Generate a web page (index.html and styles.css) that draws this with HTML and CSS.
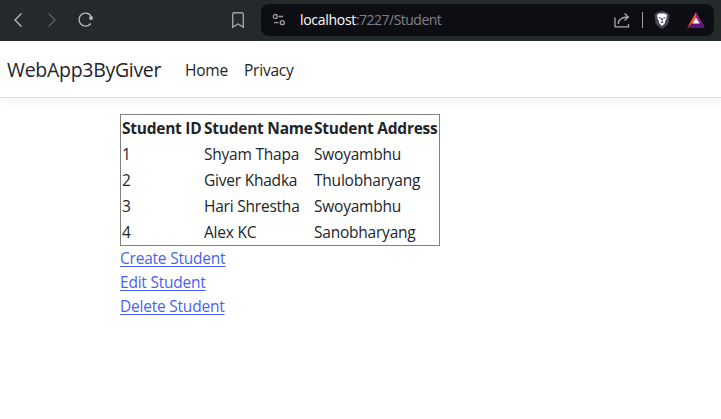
FILE: index.html
```html
<!DOCTYPE html>
<html lang="en">
<head>
<meta charset="utf-8">
<title>Student</title>
<link rel="stylesheet" href="styles.css">
</head>
<body>
<div class="toolbar">
  <svg class="icon back" width="12" height="16" viewBox="0 0 12 16"><path d="M9.500 1.500 3 8l6.500 6.500"/></svg>
  <svg class="icon forward" width="12" height="16" viewBox="0 0 12 16"><path d="M2.500 1.500 9 8l-6.500 6.500"/></svg>
  <svg class="icon reload" width="18" height="18" viewBox="0 0 18 18"><path d="M13.800 12.500A6.500 6.500 0 1 1 14.300 5.500"/><circle class="solid" cx="14" cy="7" r="2"/></svg>
  <svg class="icon bookmark" width="14" height="18" viewBox="0 0 14 18"><path d="M1.700 3.300Q1.700 1.700 3.300 1.700h7.400Q12.300 1.700 12.300 3.300v12.900L7 13l-5.300 3.200z"/></svg>
  <div class="address">
    <svg class="icon site" width="14" height="14" viewBox="0 0 14 14"><circle cx="3.300" cy="3.500" r="2"/><path d="M6.500 3.500h4.500M2 9.700h4.500"/><circle cx="10.300" cy="9.700" r="2"/></svg>
    <span class="url"><b>localhost</b>:7227/Student</span>
    <svg class="icon share" width="18" height="18" viewBox="0 0 18 18"><path d="M2 6.500v9.300h13.500v-2.900M5.300 13C5.500 8.500 8 6 15 6M11.500 2.500 15.300 6l-3.800 3.500"/></svg>
    <span class="divider"></span>
    <svg class="shield" width="16" height="18" viewBox="0 0 16 18"><path fill="#454759" d="M3 1.500 8 0l5 1.500 2.500 2-.8 8Q14.200 14 8 18 1.800 14 1.300 11.500l-.8-8z"/><path fill="#fff" d="m3 4 2-1.500h6L13 4l-.7 4-1.200 2.200L11 12l-3 3-3-3-.1-1.800L3.700 8z"/><path fill="#454759" d="m4.500 6 2.500.7-1.200 1.200zM11.500 6 9 6.700l1.200 1.200zM7.400 7h1.200l.3 2.200-.9.800-.9-.8zM6 11l2-.6 2 .6-2 1.300z"/></svg>
    <svg class="triangle" width="18" height="16" viewBox="0 0 18 16"><path fill="#ff4b28" d="M9 0v5.500L5.800 11 0 16z"/><path fill="#982088" d="M9 0v5.500l3.200 5.500L18 16z"/><path fill="#57187c" d="M0 16h18l-5.800-5H5.800z"/><path fill="#fff" d="m9 5.500 3.600 6H5.400z"/></svg>
  </div>
</div>
<header class="navbar">
  <a class="brand">WebApp3ByGiver</a>
  <a class="nav home">Home</a>
  <a class="nav privacy">Privacy</a>
</header>
<main>
  <table>
    <thead><tr><th class="id">Student ID</th><th class="name">Student Name</th><th class="addr">Student Address</th></tr></thead>
    <tbody>
      <tr><td>1</td><td>Shyam Thapa</td><td>Swoyambhu</td></tr>
      <tr><td>2</td><td>Giver Khadka</td><td>Thulobharyang</td></tr>
      <tr><td>3</td><td>Hari Shrestha</td><td>Swoyambhu</td></tr>
      <tr><td>4</td><td>Alex KC</td><td>Sanobharyang</td></tr>
    </tbody>
  </table>
  <div class="links">
    <a href="#">Create Student</a>
    <a href="#">Edit Student</a>
    <a href="#">Delete Student</a>
  </div>
</main>
</body>
</html>
```
FILE: styles.css
```css
* { box-sizing: border-box; }
body {
  margin: 0;
  background: #fff;
  color: #212529;
  font: 15.5px/24px "Open Sans", "Noto Sans", sans-serif;
  letter-spacing: -0.22px;
  overflow: hidden;
}
.toolbar {
  height: 41px;
  display: flex;
  align-items: center;
  padding: 0 7px 1px 12px;
  background: #24292c;
}
.icon { flex: none; fill: none; stroke: #aebac1; stroke-width: 1.4; }
.forward { margin-left: 22px; stroke: #596064; }
.reload { margin-left: 19px; }
.reload .solid { fill: #aebac1; stroke: none; }
.bookmark { margin-left: 136px; stroke: #98a4ab; }
.address {
  flex: 1;
  height: 32px;
  margin-left: 16px;
  padding: 0 9px 0 11px;
  display: flex;
  align-items: center;
  border-radius: 8px;
  background: #0d0e13;
}
.site { stroke: #9a9ba1; stroke-width: 1.3; }
.url { flex: 1; margin-left: 14px; font-size: 14px; letter-spacing: -0.52px; color: #808188; }
.url b { color: #fff; font-weight: 400; letter-spacing: -0.3px; }
.share { stroke: #a9aaad; stroke-width: 1.3; }
.divider { width: 1px; height: 16px; margin: 0 11px; background: #a0a1a4; }
.triangle { margin-left: 17px; }
.navbar {
  height: 57px;
  display: flex;
  align-items: center;
  padding: 1px 0 0 7px;
  border-bottom: 1px solid #dee2e6;
  box-shadow: 0 4px 12px rgba(0, 0, 0, .05);
}
.brand { width: 178px; font-size: 19.5px; letter-spacing: -0.3px; }
.nav { width: 59px; }
main { padding: 16px 0 0 120px; }
table {
  width: 320px;
  table-layout: fixed;
  border: 1px solid #808080;
  border-spacing: 0;
}
th, td { height: 26px; padding: 1px; text-align: left; white-space: nowrap; }
th { letter-spacing: -0.25px; }
.id { width: 82px; }
.name { width: 110px; }
.links { display: flex; flex-direction: column; align-items: flex-start; }
.links a {
  color: #4a5ff5;
  text-decoration: underline;
  text-underline-offset: 2px;
  text-decoration-thickness: 1px;
  text-decoration-skip-ink: none;
}
```
